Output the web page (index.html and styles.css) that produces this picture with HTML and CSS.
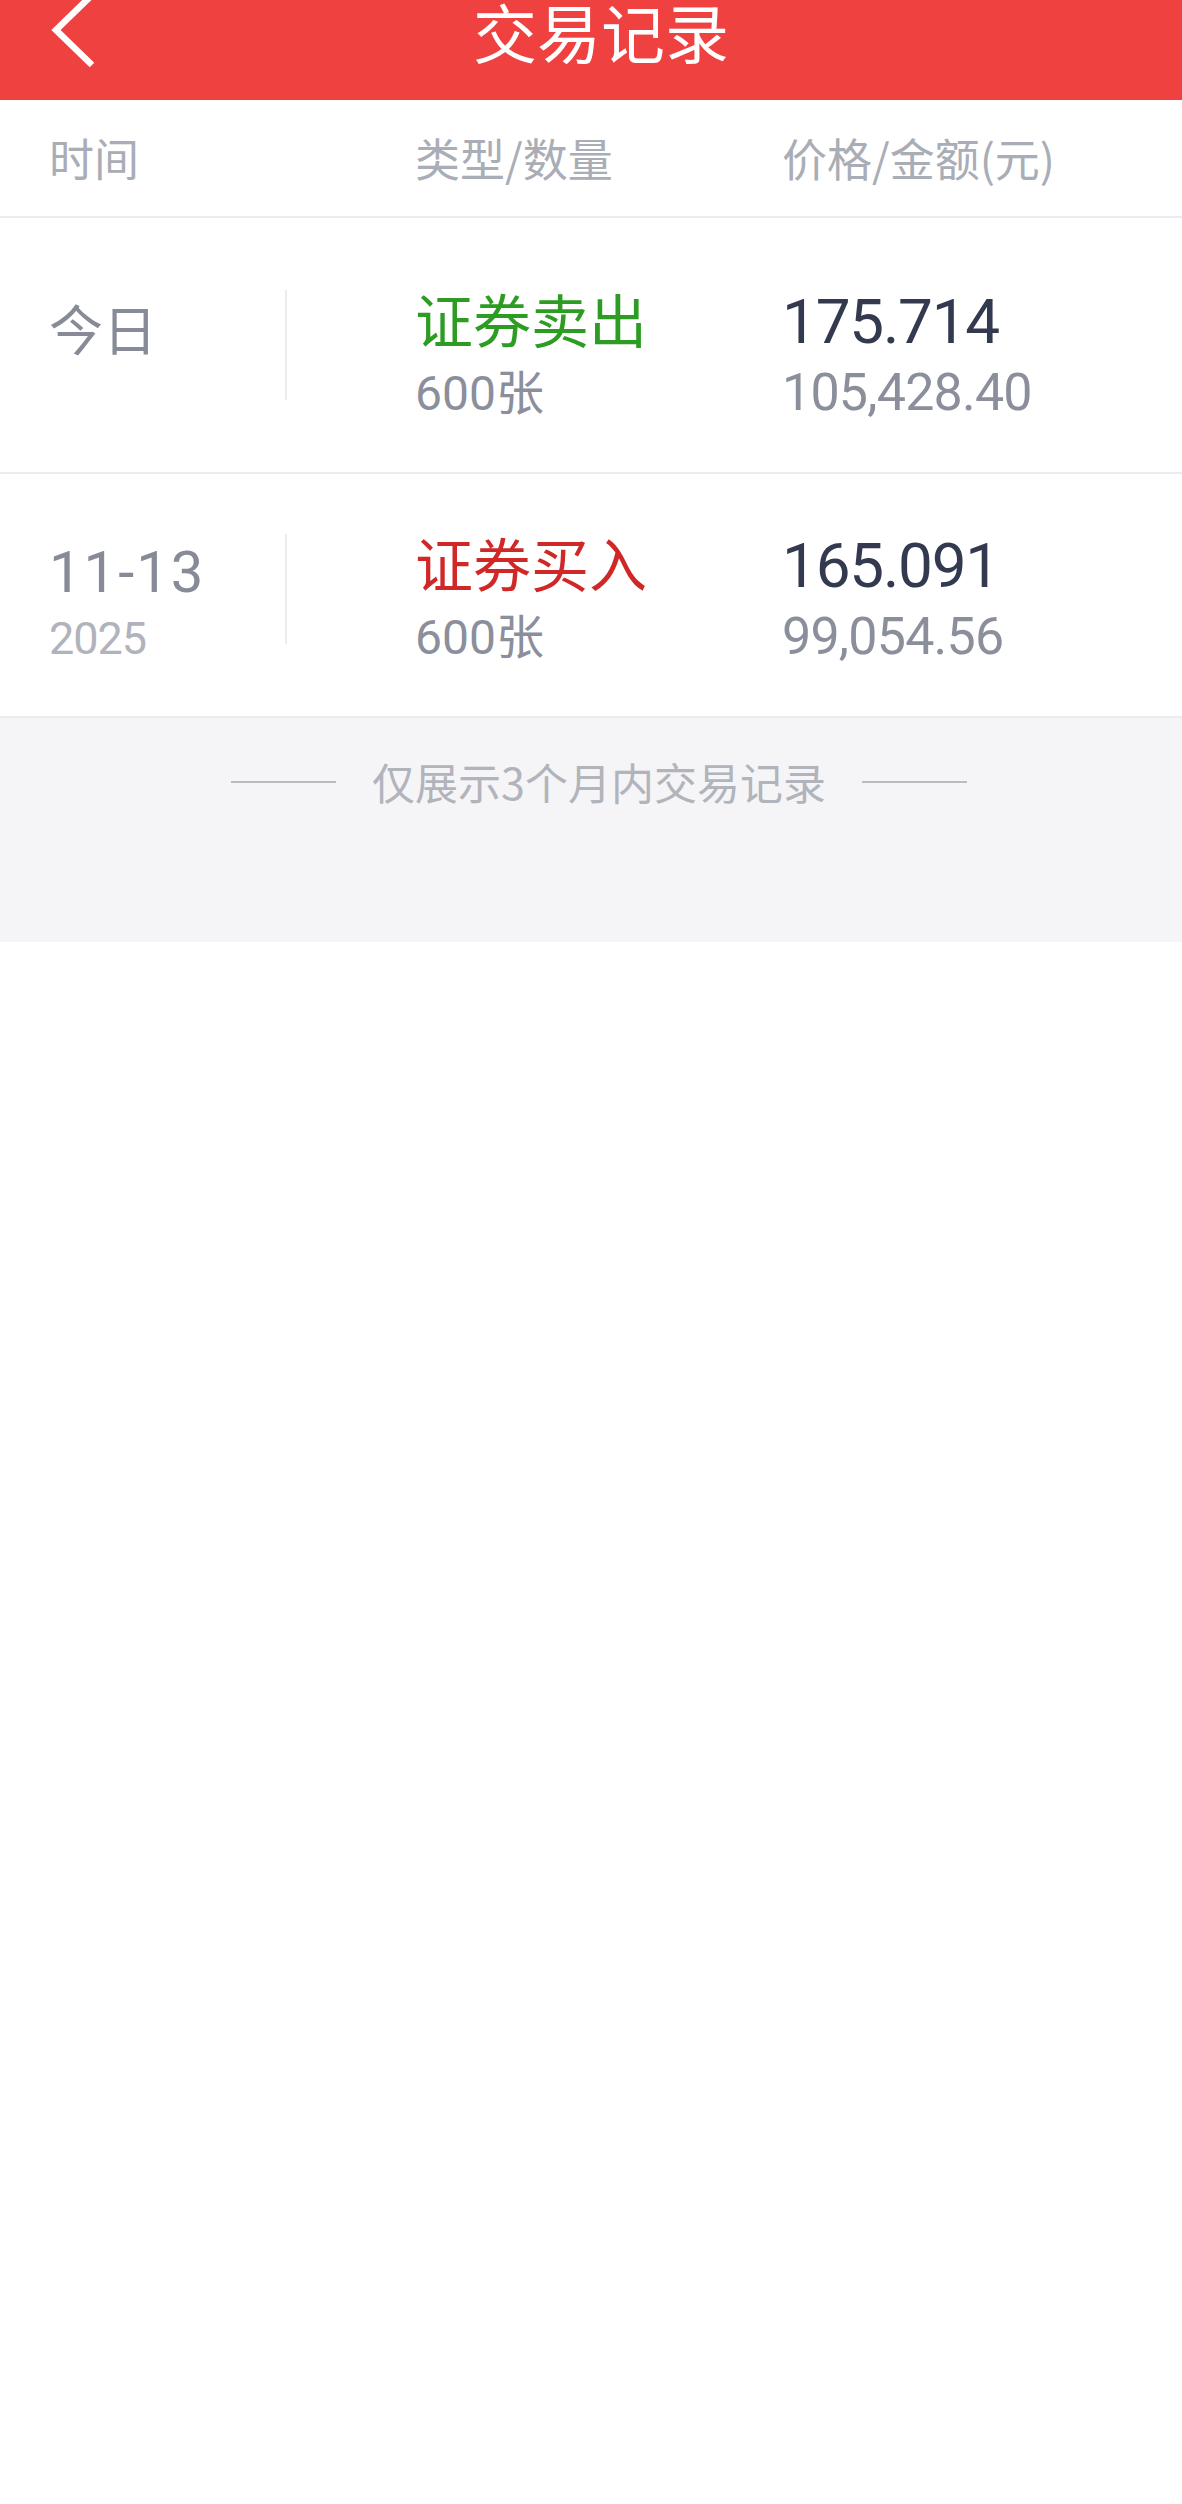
FILE: index.html
```html
<!DOCTYPE html>
<html lang="zh-CN">
<head>
  <meta charset="UTF-8">
  <meta name="viewport" content="width=device-width, initial-scale=1.0">
  <title>交易记录</title>
  <link rel="stylesheet" href="styles.css">
</head>
<body>
  <header class="topbar">
    <a class="back" href="#">
      <svg width="120" height="100" viewBox="0 0 120 100">
        <polyline points="92,-5 56,30 92,65" fill="none" stroke="#fff" stroke-width="6.5"/>
      </svg>
    </a>
    <h1 class="title">交易记录</h1>
    <span></span>
  </header>

  <!-- 表头 -->
  <div class="cols">
    <span>时间</span>
    <span>类型/数量</span>
    <span>价格/金额(元)</span>
  </div>

  <!-- 交易列表 -->
  <div class="list">
    <div class="record">
      <div class="date">
        <div class="day">今日</div>
      </div>
      <span class="sep"></span>
      <div class="type">
        <div class="kind sell">证券卖出</div>
        <div class="qty">600张</div>
      </div>
      <div class="price">
        <div class="unit">175.714</div>
        <div class="amount">105,428.40</div>
      </div>
    </div>
    <div class="record">
      <div class="date">
        <div class="day num">11-13</div>
        <div class="year">2025</div>
      </div>
      <span class="sep"></span>
      <div class="type">
        <div class="kind buy">证券买入</div>
        <div class="qty">600张</div>
      </div>
      <div class="price">
        <div class="unit">165.091</div>
        <div class="amount">99,054.56</div>
      </div>
    </div>
  </div>

  <div class="tip">
    <span class="line"></span>
    <span class="tip-text">仅展示3个月内交易记录</span>
    <span class="line"></span>
  </div>
</body>
</html>
```

FILE: styles.css
```css
body{
  margin: 0;
  background-color: #fff;
  font-family: "Noto Sans CJK SC", sans-serif;
}
/* 顶部栏 */
.topbar{
  display: grid;
  grid-template-columns: 120px 1fr 120px;
  height: 100px;
  background-color: #f04141;
}
.back svg{
  display: block;
}
.title{
  margin: 0;
  padding-left: 20px;
  text-align: center;
  font-size: 64px;
  font-weight: normal;
  line-height: 60px;
  color: #fff;
}
/* 表头 */
.cols{
  display: grid;
  grid-template-columns: 366px 367px 1fr;
  align-items: center;
  height: 116px;
  padding-left: 49px;
  border-bottom: 2px solid #ececee;
  font-size: 45px;
  line-height: 54px;
  color: #a9adb6;
}
/* 记录 */
.record{
  display: flex;
  align-items: flex-start;
  padding: 52px 0 38px 49px;
  border-bottom: 2px solid #ececee;
}
.record:first-child{
  padding-top: 64px;
}
.date{
  width: 236px;
  padding-top: 10px;
  color: #878b98;
}
.day{
  font-size: 54px;
  line-height: 72px;
}
.day.num{
  font-family: Roboto, "Noto Sans CJK SC", sans-serif;
  font-size: 58px;
  letter-spacing: 2px;
}
.year{
  font-family: Roboto, "Noto Sans CJK SC", sans-serif;
  font-size: 45px;
  line-height: 62px;
  letter-spacing: -1px;
  color: #b0b3bb;
}
.sep{
  width: 2px;
  height: 110px;
  margin-top: 8px;
  background-color: #ececee;
}
.type{
  width: 367px;
  margin-left: 128px;
}
.kind{
  font-size: 58px;
  line-height: 72px;
}
.sell{
  color: #2d9c22;
}
.buy{
  color: #d02727;
}
.qty{
  font-family: Roboto, "Noto Sans CJK SC", sans-serif;
  font-size: 48px;
  line-height: 80px;
  color: #8b8f9c;
}
.price{
  flex: 1;
  padding-top: 4px;
  font-family: Roboto, "Noto Sans CJK SC", sans-serif;
}
.unit{
  font-size: 62px;
  line-height: 72px;
  letter-spacing: -1.2px;
  color: #333a4f;
}
.amount{
  font-size: 52px;
  line-height: 70px;
  letter-spacing: -0.8px;
  color: #8b8f9c;
}
/* 底部提示 */
.tip{
  display: flex;
  justify-content: center;
  align-items: flex-start;
  gap: 36px;
  height: 191px;
  padding: 33px 0 0 16px;
  background-color: #f5f5f7;
}
.line{
  width: 105px;
  height: 2px;
  margin-top: 30px;
  background-color: #b9bcc3;
}
.tip-text{
  font-size: 43px;
  line-height: 60px;
  color: #b1b4bb;
}
```
